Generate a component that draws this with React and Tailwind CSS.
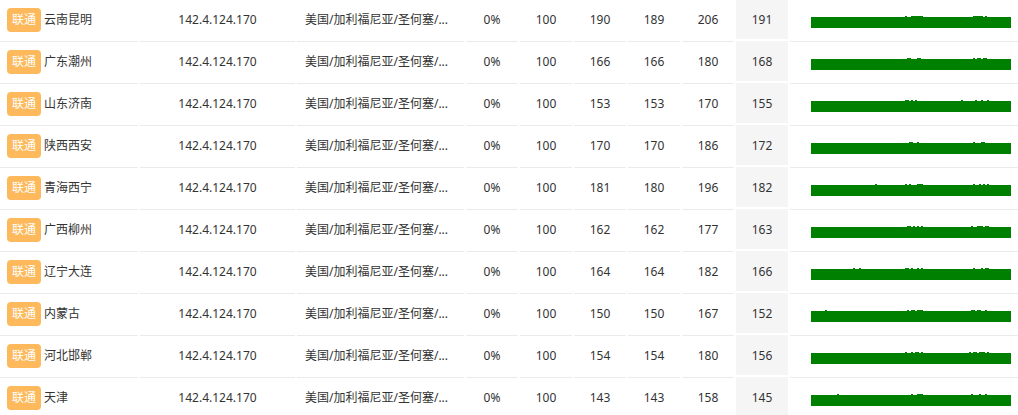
import React from "react";

const rows = [
  { region: "云南昆明", v: [190, 189, 206, 191] },
  { region: "广东潮州", v: [166, 166, 180, 168] },
  { region: "山东济南", v: [153, 153, 170, 155] },
  { region: "陕西西安", v: [170, 170, 186, 172] },
  { region: "青海西宁", v: [181, 180, 196, 182] },
  { region: "广西柳州", v: [162, 162, 177, 163] },
  { region: "辽宁大连", v: [164, 164, 182, 166] },
  { region: "内蒙古", v: [150, 150, 167, 152] },
  { region: "河北邯郸", v: [154, 154, 180, 156] },
  { region: "天津", v: [143, 143, 158, 145] },
];

// 간단한 시드 난수
function rng(seed) {
  let s = seed * 9301 + 49297;
  return () => {
    s = (s * 9301 + 49297) % 233280;
    return s / 233280;
  };
}

function Spark({ seed }) {
  const r = rng(seed + 3);
  const bars = [];
  for (let i = 0; i < 100; i++) {
    const x = i * 2;
    let h = 11;
    const inBump = (x >= 94 && x < 112) || (x >= 160 && x < 178);
    if (inBump && r() > 0.5) h += 1;
    else if (r() > 0.985) h += 1;
    bars.push(<rect key={i} x={x} y={13 - h} width="2" height={h} fill="#008000" />);
  }
  return (
    <svg width="200" height="13" viewBox="0 0 200 13" className="block">
      {bars}
    </svg>
  );
}

const cell = "h-[40px] border-t border-[#e8eaec] flex items-center";

export default function App() {
  return (
    <div
      className="w-[1018px] h-[415px] overflow-hidden bg-white text-[12px] text-[#333]"
      style={{ fontFamily: '"Noto Sans", "Noto Sans CJK SC", sans-serif' }}
    >
      <div className="flex flex-col gap-[2px] -mt-px">
        {rows.map((row, i) => (
          <div key={i} className="flex gap-[2px] shrink-0">
            <div className={`${cell} w-[138px] shrink-0 pl-[7px]`}>
              <span className="h-[24px] w-[34px] rounded-[4px] bg-[#fdb95b] text-white flex items-center justify-center">
                联通
              </span>
              <span className="ml-[3px]">{row.region}</span>
            </div>
            <div className={`${cell} w-[155px] shrink-0 justify-center`}>142.4.124.170</div>
            <div className={`${cell} w-[167px] shrink-0 pl-[8px] whitespace-nowrap`}>
              美国/加利福尼亚/圣何塞/...
            </div>
            <div className={`${cell} w-[52px] shrink-0 justify-center`}>0%</div>
            <div className={`${cell} w-[52px] shrink-0 justify-center`}>100</div>
            <div className={`${cell} w-[52px] shrink-0 justify-center`}>{row.v[0]}</div>
            <div className={`${cell} w-[52px] shrink-0 justify-center`}>{row.v[1]}</div>
            <div className={`${cell} w-[52px] shrink-0 justify-center`}>{row.v[2]}</div>
            <div className="h-[40px] w-[52px] shrink-0 flex items-center justify-center bg-[#f5f5f5] border-t border-[#f5f5f5]">
              {row.v[3]}
            </div>
            <div className={`${cell} w-[229px] shrink-0 pl-[21px] items-start pt-[15px]`}>
              <Spark seed={i} />
            </div>
          </div>
        ))}
      </div>
    </div>
  );
}
